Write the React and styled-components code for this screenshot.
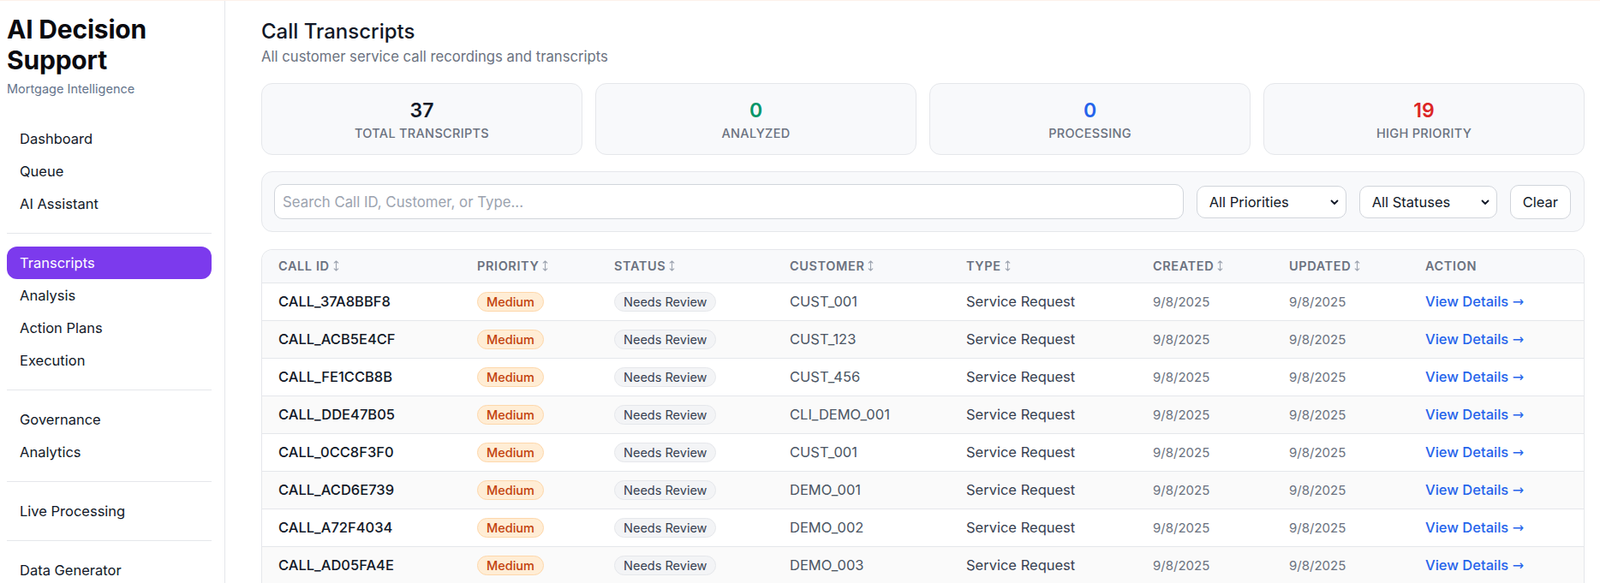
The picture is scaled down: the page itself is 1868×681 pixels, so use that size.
import styled, { createGlobalStyle } from 'styled-components';

const GlobalStyle = createGlobalStyle`
  body {
    margin: 0;
    font-family: Inter, "Noto Sans", sans-serif;
    color: #111827;
    background: #fff;
  }
  * { box-sizing: border-box; }
`

const Layout = styled.div`
  display: flex;
  min-height: 100vh;
  border-top: 1px solid #fdf1ea;
`

const Sidebar = styled.aside`
  width: 263px;
  flex-shrink: 0;
  border-right: 1px solid #e5e7eb;
  padding: 15px 15px 0 8px;
`

const Brand = styled.h1`
  margin: 0;
  font-size: 30px;
  line-height: 36px;
  font-weight: 700;
  color: #0a0a0f;
  letter-spacing: -0.2px;
`

const Tagline = styled.div`
  margin-top: 6px;
  font-size: 14.5px;
  line-height: 20px;
  color: #64748b;
`

const Nav = styled.nav`
  margin-top: 29px;
  display: flex;
  flex-direction: column;
`

const NavItem = styled.a`
  display: block;
  padding: 0 15px;
  height: 38px;
  line-height: 38px;
  font-size: 16.5px;
  color: ${({ active }) => (active ? '#fff' : '#111827')};
  background: ${({ active }) => (active ? '#7c3aed' : 'transparent')};
  border-radius: 12px;
  text-decoration: none;
  cursor: pointer;
`

const Divider = styled.hr`
  margin: 15px 0;
  border: none;
  border-top: 1px solid #e5e7eb;
`

const Main = styled.main`
  flex: 1;
  min-width: 0;
  padding: 20px 18px 0 42px;
`

const Title = styled.h2`
  margin: 0;
  font-size: 24px;
  line-height: 32px;
  font-weight: 500;
  color: #111827;
`

const Subtitle = styled.p`
  margin: 1px 0 0;
  font-size: 16.7px;
  line-height: 24px;
  color: #6b7280;
`

const Stats = styled.div`
  display: grid;
  grid-template-columns: repeat(4, 1fr);
  gap: 15px;
  margin-top: 19px;
`

const StatCard = styled.div`
  background: #f8f9fb;
  border: 1px solid #e5e7eb;
  border-radius: 13px;
  padding: 17px 15px 14px;
  text-align: center;
`

const StatValue = styled.div`
  font-size: 23px;
  line-height: 28px;
  font-weight: 600;
  color: ${({ tone }) => tone};
`

const StatLabel = styled.div`
  margin-top: 3px;
  font-size: 14.5px;
  line-height: 20px;
  font-weight: 500;
  letter-spacing: 0.3px;
  color: #6b7280;
  text-transform: uppercase;
`

const FilterBar = styled.div`
  margin-top: 19px;
  display: flex;
  align-items: center;
  gap: 15px;
  background: #f8f9fb;
  border: 1px solid #e5e7eb;
  border-radius: 13px;
  padding: 14px 15px 14px 14px;
`

const Search = styled.input`
  flex: 1;
  height: 41px;
  padding: 0 9px;
  border: 1px solid #d1d5db;
  border-radius: 10px;
  font-family: inherit;
  font-size: 16.8px;
  color: #111827;
  background: #fff;
  outline: none;
  &::placeholder { color: #9ca3af; }
`

const SelectWrap = styled.div`
  position: relative;
  width: ${({ w }) => w}px;
  height: 38px;
`

const Select = styled.select`
  appearance: none;
  width: 100%;
  height: 100%;
  padding: 0 30px 0 14px;
  border: 1px solid #d1d5db;
  border-radius: 10px;
  background: #fff;
  font-family: inherit;
  font-size: 16.5px;
  color: #111827;
`

const Chevron = styled.svg`
  position: absolute;
  right: 8px;
  top: 50%;
  transform: translateY(-50%);
  pointer-events: none;
`

const ClearButton = styled.button`
  height: 40px;
  padding: 0 14px;
  border: 1px solid #d1d5db;
  border-radius: 10px;
  background: #fff;
  font-family: inherit;
  font-size: 16.5px;
  color: #111827;
  cursor: pointer;
`

const TableCard = styled.div`
  margin-top: 20px;
  border: 1px solid #e5e7eb;
  border-bottom: none;
  border-radius: 13px 13px 0 0;
  overflow: hidden;
`

const Table = styled.table`
  width: 100%;
  border-collapse: collapse;
  table-layout: fixed;
`

const Th = styled.th`
  width: ${({ w }) => (w ? `${w}px` : 'auto')};
  height: 38px;
  padding: 0 19px;
  background: #f8f9fb;
  text-align: left;
  font-size: 14.5px;
  font-weight: 600;
  letter-spacing: 0.6px;
  color: #6b7280;
  text-transform: uppercase;
  white-space: nowrap;
`

const SortIcon = styled.svg`
  margin-left: 4px;
  vertical-align: -1px;
`

const Row = styled.tr`
  background: ${({ striped }) => (striped ? '#fafafa' : '#fff')};
  border-top: 1px solid #e5e7eb;
`

const Td = styled.td`
  height: 44px;
  padding: 0 19px;
  font-size: ${({ small }) => (small ? '15px' : '16.5px')};
  font-weight: ${({ strong }) => (strong ? 500 : 400)};
  color: ${({ tone }) => tone || '#111827'};
  white-space: nowrap;
`

const Badge = styled.span`
  display: inline-block;
  height: 23px;
  line-height: 21px;
  padding: 0 10px;
  border-radius: 999px;
  font-size: 14.5px;
  font-weight: ${({ kind }) => (kind === 'priority' ? 500 : 400)};
  background: ${({ kind }) => (kind === 'priority' ? '#ffedd5' : '#f3f4f6')};
  border: 1px solid ${({ kind }) => (kind === 'priority' ? '#fed7aa' : '#e5e7eb')};
  color: ${({ kind }) => (kind === 'priority' ? '#c2410c' : '#374151')};
`

const DetailsLink = styled.a`
  color: #2563eb;
  font-weight: 500;
  text-decoration: none;
  cursor: pointer;
`

const Arrow = styled.span`
  font-family: "DejaVu Sans", sans-serif;
  font-weight: 400;
  font-size: 16px;
`

const stats = [
  { value: 37, label: 'Total Transcripts', tone: '#111827' },
  { value: 0, label: 'Analyzed', tone: '#059669' },
  { value: 0, label: 'Processing', tone: '#2563eb' },
  { value: 19, label: 'High Priority', tone: '#dc2626' },
];

const columns = [
  { label: 'Call ID', w: 232, sort: true },
  { label: 'Priority', w: 160, sort: true },
  { label: 'Status', w: 205, sort: true },
  { label: 'Customer', w: 206, sort: true },
  { label: 'Type', w: 218, sort: true },
  { label: 'Created', w: 159, sort: true },
  { label: 'Updated', w: 159, sort: true },
  { label: 'Action' },
];

const calls = [
  ['CALL_37A8BBF8', 'CUST_001'],
  ['CALL_ACB5E4CF', 'CUST_123'],
  ['CALL_FE1CCB8B', 'CUST_456'],
  ['CALL_DDE47B05', 'CLI_DEMO_001'],
  ['CALL_0CC8F3F0', 'CUST_001'],
  ['CALL_ACD6E739', 'DEMO_001'],
  ['CALL_A72F4034', 'DEMO_002'],
  ['CALL_AD05FA4E', 'DEMO_003'],
];

const navGroups = [
  ['Dashboard', 'Queue', 'AI Assistant'],
  ['Transcripts', 'Analysis', 'Action Plans', 'Execution'],
  ['Governance', 'Analytics'],
  ['Live Processing'],
  ['Data Generator'],
];

const ChevronDown = () => (
  <Chevron width="12" height="12" viewBox="0 0 12 12" fill="none">
    <path d="M2.5 4.5L6 8l3.5-3.5" stroke="#111827" strokeWidth="1.8" strokeLinecap="round" strokeLinejoin="round" />
  </Chevron>
)

// thin up/down sort arrow
const SortArrows = () => (
  <SortIcon width="7" height="13" viewBox="0 0 7 13" fill="none">
    <path d="M3.5 1v11M1.2 3.2L3.5 1l2.3 2.2M1.2 9.8L3.5 12l2.3-2.2" stroke="#9ca3af" strokeWidth="1.1" strokeLinecap="round" strokeLinejoin="round" />
  </SortIcon>
)

const App = () => {
  return (
    <Layout>
      <GlobalStyle />
      <Sidebar>
        <Brand>AI Decision Support</Brand>
        <Tagline>Mortgage Intelligence</Tagline>
        <Nav>
          {navGroups.map((group, i) => (
            <div key={i}>
              {i > 0 && <Divider />}
              {group.map((item) => (
                <NavItem key={item} active={item === 'Transcripts'}>{item}</NavItem>
              ))}
            </div>
          ))}
        </Nav>
      </Sidebar>

      <Main>
        <Title>Call Transcripts</Title>
        <Subtitle>All customer service call recordings and transcripts</Subtitle>

        <Stats>
          {stats.map((s) => (
            <StatCard key={s.label}>
              <StatValue tone={s.tone}>{s.value}</StatValue>
              <StatLabel>{s.label}</StatLabel>
            </StatCard>
          ))}
        </Stats>

        <FilterBar>
          <Search type="text" placeholder="Search Call ID, Customer, or Type..." />
          <SelectWrap w={175}>
            <Select defaultValue="all">
              <option value="all">All Priorities</option>
            </Select>
            <ChevronDown />
          </SelectWrap>
          <SelectWrap w={161}>
            <Select defaultValue="all">
              <option value="all">All Statuses</option>
            </Select>
            <ChevronDown />
          </SelectWrap>
          <ClearButton>Clear</ClearButton>
        </FilterBar>

        <TableCard>
          <Table>
            <thead>
              <tr>
                {columns.map((c) => (
                  <Th key={c.label} w={c.w}>
                    {c.label}
                    {c.sort && <SortArrows />}
                  </Th>
                ))}
              </tr>
            </thead>
            <tbody>
              {calls.map(([id, customer], i) => (
                <Row key={id} striped={i % 2 === 1}>
                  <Td strong>{id}</Td>
                  <Td><Badge kind="priority">Medium</Badge></Td>
                  <Td><Badge>Needs Review</Badge></Td>
                  <Td tone="#4b5563">{customer}</Td>
                  <Td tone="#374151">Service Request</Td>
                  <Td small tone="#6b7280">9/8/2025</Td>
                  <Td small tone="#6b7280">9/8/2025</Td>
                  <Td><DetailsLink>View Details <Arrow>→</Arrow></DetailsLink></Td>
                </Row>
              ))}
            </tbody>
          </Table>
        </TableCard>
      </Main>
    </Layout>
  )
}

export default App;
